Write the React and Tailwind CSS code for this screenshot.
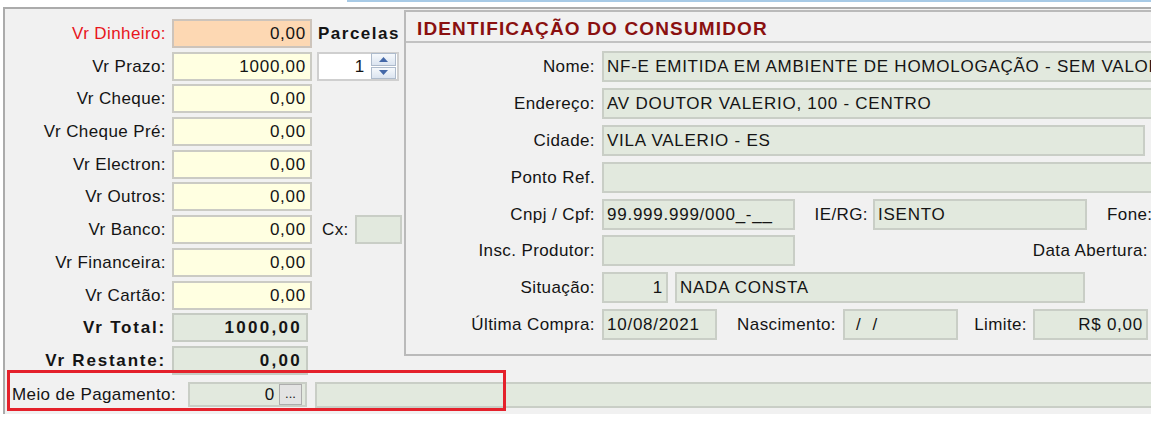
const LBL = "tracking-[0.4px] whitespace-nowrap";
const VAL = "tracking-[0.75px] whitespace-nowrap";
const BOLDLBL = "font-bold tracking-[1.8px] whitespace-nowrap";
const BOLDVAL = "font-bold tracking-[2.3px] whitespace-nowrap";

const YELLOW = "w-[140px] bg-[#ffffe1] border-[#cbcbc4]";
const ORANGE = "w-[140px] bg-[#fdd8b3] border-[#cdc4bb]";
const GREENL = "w-[136px] bg-[#e2e9de] border-[#c6cbc3]";

function LeftRow({ label, labelClass, inputClass, value, valueClass, children }) {
  return (
    <div className="flex items-center h-[29px]">
      <div className={"w-[161px] shrink-0 text-right " + labelClass}>{label}</div>
      <div className={"ml-[6px] h-full shrink-0 flex items-center justify-end pr-[4px] border-2 " + inputClass}>
        <span className={valueClass}>{value}</span>
      </div>
      {children}
    </div>
  );
}

function Spin() {
  return (
    <div className="ml-[5px] w-[82px] h-[29px] bg-white border-2 border-[#cfcfcf] flex items-center">
      <span className={"flex-1 text-right pr-[6px] " + VAL}>1</span>
      <div className="w-[25px] h-[26px] mr-[1px] flex flex-col gap-[1px]">
        <div className="flex-1 border border-[#aebbcc] bg-linear-to-b from-[#f6f9fc] to-[#dbe4f0] flex items-center justify-center">
          <svg width="9" height="5" viewBox="0 0 9 5"><polygon points="0,5 4.5,0 9,5" fill="#4468a8" /></svg>
        </div>
        <div className="flex-1 border border-[#aebbcc] bg-linear-to-b from-[#f6f9fc] to-[#dbe4f0] flex items-center justify-center">
          <svg width="9" height="5" viewBox="0 0 9 5"><polygon points="0,0 4.5,5 9,0" fill="#4468a8" /></svg>
        </div>
      </div>
    </div>
  );
}

const G = "h-full shrink-0 border-2 bg-[#e2e9de] border-[#c9cec6] flex items-center overflow-hidden";

function RLabel({ children }) {
  return <div className={"w-[189px] shrink-0 text-right " + LBL}>{children}</div>;
}

export default function App() {
  return (
    <div className="relative w-[1151px] h-[427px] overflow-hidden bg-white font-['Liberation_Sans',Arial,sans-serif] text-[17px] leading-none text-[#141414]">
      <div className="ml-[347px] h-[2px] bg-[#a7cae6]" />
      <div className="mt-[5px] ml-[3px] h-[407px] border-t-2 border-l-2 border-[#ababab] bg-[#f1f1f1] flex flex-col">
        <div className="flex h-[366px] shrink-0">
          {/* left column */}
          <div className="w-[399px] shrink-0 pt-[10px] flex flex-col gap-[3.7px]">
            <LeftRow label="Vr Dinheiro:" labelClass={LBL + " text-[#e8161c]"} inputClass={ORANGE} value="0,00" valueClass={VAL}>
              <span className="ml-[6px] font-bold tracking-[1.5px] whitespace-nowrap">Parcelas</span>
            </LeftRow>
            <LeftRow label="Vr Prazo:" labelClass={LBL} inputClass={YELLOW} value="1000,00" valueClass={VAL}>
              <Spin />
            </LeftRow>
            <LeftRow label="Vr Cheque:" labelClass={LBL} inputClass={YELLOW} value="0,00" valueClass={VAL} />
            <LeftRow label="Vr Cheque Pré:" labelClass={LBL} inputClass={YELLOW} value="0,00" valueClass={VAL} />
            <LeftRow label="Vr Electron:" labelClass={LBL} inputClass={YELLOW} value="0,00" valueClass={VAL} />
            <LeftRow label="Vr Outros:" labelClass={LBL} inputClass={YELLOW} value="0,00" valueClass={VAL} />
            <LeftRow label="Vr Banco:" labelClass={LBL} inputClass={YELLOW} value="0,00" valueClass={VAL}>
              <span className={"ml-[10px] " + LBL}>Cx:</span>
              <div className="ml-[6px] w-[47px] h-[29px] border-2 bg-[#e2e9de] border-[#c9cec6]" />
            </LeftRow>
            <LeftRow label="Vr Financeira:" labelClass={LBL} inputClass={YELLOW} value="0,00" valueClass={VAL} />
            <LeftRow label="Vr Cartão:" labelClass={LBL} inputClass={YELLOW} value="0,00" valueClass={VAL} />
            <LeftRow label="Vr Total:" labelClass={BOLDLBL} inputClass={GREENL} value="1000,00" valueClass={BOLDVAL} />
            <LeftRow label="Vr Restante:" labelClass={BOLDLBL} inputClass={GREENL} value="0,00" valueClass={BOLDVAL} />
          </div>

          {/* right group box */}
          <div className="flex-1 mt-[1px] h-[346px] border-t-2 border-l-2 border-b-2 border-[#bababa] overflow-hidden flex flex-col">
            <div className="h-[31px] shrink-0 border-b-2 border-[#c2c2c2] pl-[11px] pt-[3px] flex items-center">
              <span className="text-[19px] font-bold tracking-[1.15px] text-[#8a1010] whitespace-nowrap">IDENTIFICAÇÃO DO CONSUMIDOR</span>
            </div>
            <div className="pt-[8px] flex flex-col gap-[5.9px]">
              <div className="flex items-center h-[31px]">
                <RLabel>Nome:</RLabel>
                <div className={"ml-[7px] w-[640px] pl-[3px] " + G}><span className={VAL}>NF-E EMITIDA EM AMBIENTE DE HOMOLOGAÇÃO - SEM VALOR FISCAL</span></div>
              </div>
              <div className="flex items-center h-[31px]">
                <RLabel>Endereço:</RLabel>
                <div className={"ml-[7px] w-[640px] pl-[3px] " + G}><span className={VAL}>AV DOUTOR VALERIO, 100 - CENTRO</span></div>
              </div>
              <div className="flex items-center h-[31px]">
                <RLabel>Cidade:</RLabel>
                <div className={"ml-[7px] w-[543px] pl-[3px] " + G}><span className={VAL}>VILA VALERIO - ES</span></div>
              </div>
              <div className="flex items-center h-[31px]">
                <RLabel>Ponto Ref.</RLabel>
                <div className={"ml-[7px] w-[640px] " + G} />
              </div>
              <div className="flex items-center h-[31px]">
                <RLabel>Cnpj / Cpf:</RLabel>
                <div className={"ml-[7px] w-[193px] pl-[3px] " + G}><span className={VAL}>99.999.999/000_-__</span></div>
                <div className={"w-[73px] shrink-0 text-right " + LBL}>IE/RG:</div>
                <div className={"ml-[5px] w-[214px] pl-[3px] " + G}><span className={VAL}>ISENTO</span></div>
                <span className={"ml-[20px] " + LBL}>Fone:</span>
              </div>
              <div className="flex items-center h-[31px]">
                <RLabel>Insc. Produtor:</RLabel>
                <div className={"ml-[7px] w-[193px] " + G} />
                <div className={"w-[353px] shrink-0 text-right " + LBL}>Data Abertura:</div>
              </div>
              <div className="flex items-center h-[31px]">
                <RLabel>Situação:</RLabel>
                <div className={"ml-[7px] w-[66px] justify-end pr-[3px] " + G}><span className={VAL}>1</span></div>
                <div className={"ml-[7px] w-[410px] pl-[3px] " + G}><span className={VAL}>NADA CONSTA</span></div>
              </div>
              <div className="flex items-center h-[31px]">
                <RLabel>Última Compra:</RLabel>
                <div className={"ml-[7px] w-[115px] pl-[3px] " + G}><span className={VAL}>10/08/2021</span></div>
                <div className={"w-[119px] shrink-0 text-right " + LBL}>Nascimento:</div>
                <div className={"ml-[7px] w-[115px] pl-[11px] " + G}><span className={VAL + " whitespace-pre"}>/  /</span></div>
                <div className={"w-[69px] shrink-0 text-right " + LBL}>Limite:</div>
                <div className={"ml-[6px] w-[115px] justify-end pr-[3px] " + G}><span className={VAL}>R$ 0,00</span></div>
              </div>
            </div>
          </div>
        </div>

        {/* Meio de pagamento row */}
        <div className="mt-[6.5px] flex items-start h-[27px]">
          <div className={"w-[179px] shrink-0 pl-[7px] h-[25px] flex items-center " + LBL}>Meio de Pagamento:</div>
          <div className="ml-[4px] w-[119px] h-[25px] shrink-0 border-2 bg-[#e2e9de] border-[#c9cec6] flex items-center justify-end pr-[3px] gap-[4px]">
            <span className={VAL}>0</span>
            <div className="w-[23px] h-[21px] bg-[#e3e3e3] border border-[#adadad] flex items-end justify-center pb-[4px] text-[13px] leading-none">...</div>
          </div>
          <div className="ml-[8px] flex-1 h-[26px] mt-[0.5px] border-2 border-r-0 bg-[#e2e9de] border-[#c9cec6]" />
        </div>
      </div>

      {/* red highlight annotation */}
      <div className="absolute left-[7px] top-[370px] w-[499px] h-[41px] border-[3px] border-[#e4212b] pointer-events-none" />
    </div>
  );
}
